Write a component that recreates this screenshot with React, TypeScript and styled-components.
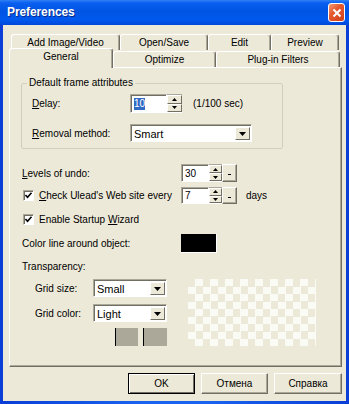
import styled, { createGlobalStyle } from "styled-components";

type tabProp = {
  title: string;
  width: number;
  active?: boolean;
};

const backTabs: tabProp[] = [
  { title: "Add Image/Video", width: 109 },
  { title: "Open/Save", width: 88 },
  { title: "Edit", width: 63 },
  { title: "Preview", width: 68 },
];

const frontTabs: tabProp[] = [
  { title: "General", width: 104, active: true },
  { title: "Optimize", width: 103 },
  { title: "Plug-in Filters", width: 124 },
];

const GlobalStyle = createGlobalStyle`
  html, body {
    margin: 0;
    padding: 0;
    background: #fff;
  }
  body {
    font-family: "Liberation Sans", Arial, sans-serif;
    font-size: 10px;
    color: #000;
  }
`;

const Arrow = ({ dir }: { dir: "up" | "down" }): JSX.Element => (
  <svg width="5" height="3" viewBox="0 0 5 3">
    {dir === "up" ? (
      <polygon points="2.5,0 5,3 0,3" fill="#000" />
    ) : (
      <polygon points="0,0 5,0 2.5,3" fill="#000" />
    )}
  </svg>
);

const Spinner = ({
  value,
  textWidth,
  spinWidth,
  height,
  extra,
  selected,
}: {
  value: string;
  textWidth: number;
  spinWidth: number;
  height: number;
  extra?: boolean;
  selected?: boolean;
}): JSX.Element => (
  <SpinWrap $h={height}>
    <TextBox $w={textWidth}>
      {selected ? <Selected>{value}</Selected> : value}
    </TextBox>
    <SpinCol $w={spinWidth}>
      <SpinBtn>
        <Arrow dir="up" />
      </SpinBtn>
      <SpinBtn>
        <Arrow dir="down" />
      </SpinBtn>
    </SpinCol>
    {extra && (
      <ExtraBtn>
        <Dash />
      </ExtraBtn>
    )}
  </SpinWrap>
);

const Combo = ({
  value,
  width,
  height,
}: {
  value: string;
  width: number;
  height: number;
}): JSX.Element => (
  <ComboBox $w={width} $h={height}>
    <ComboText>{value}</ComboText>
    <ComboBtn>
      <svg width="7" height="4" viewBox="0 0 7 4">
        <polygon points="0,0 7,0 3.5,4" fill="#000" />
      </svg>
    </ComboBtn>
  </ComboBox>
);

const Check = (): JSX.Element => (
  <CheckBox>
    <svg width="9" height="9" viewBox="0 0 9 9">
      <path d="M1.5 4 L3.5 6.2 L7.5 1.8" stroke="#000" strokeWidth="1.6" fill="none" />
    </svg>
  </CheckBox>
);

export default function App(): JSX.Element {
  return (
    <>
      <GlobalStyle />
      <Window>
        <TitleBar>
          <Title>Preferences</Title>
          <CloseButton>
            <svg width="10" height="10" viewBox="0 0 10 10">
              <path d="M1.5 1.5 L8.5 8.5 M8.5 1.5 L1.5 8.5" stroke="#fff" strokeWidth="2" />
            </svg>
          </CloseButton>
        </TitleBar>

        <Frame>
          <Body>
            <Tabs>
              <TabRow $indent={2}>
                {backTabs.map((tab, index) => (
                  <Tab key={index} $w={tab.width}>
                    {tab.title}
                  </Tab>
                ))}
              </TabRow>
              <TabRow $indent={0}>
                {frontTabs.map((tab, index) => (
                  <Tab key={index} $w={tab.width} $active={tab.active} $front>
                    {tab.title}
                  </Tab>
                ))}
              </TabRow>
            </Tabs>

            <Panel>
              <Group>
                <Legend>Default frame attributes</Legend>
                <GroupRow $h={19} $top={5}>
                  <GroupLabel>
                    <u>D</u>elay:
                  </GroupLabel>
                  <Spinner value="10" textWidth={37} spinWidth={15} height={19} selected />
                  <Unit>(1/100 sec)</Unit>
                </GroupRow>
                <GroupRow $h={18} $top={11}>
                  <GroupLabel>
                    <u>R</u>emoval method:
                  </GroupLabel>
                  <Combo value="Smart" width={122} height={18} />
                </GroupRow>
              </Group>

              <Row $h={18} $top={15}>
                <Label>
                  <u>L</u>evels of undo:
                </Label>
                <Spinner value="30" textWidth={28} spinWidth={13} height={18} extra />
              </Row>

              <Row $h={17} $top={5}>
                <Label>
                  <Check />
                  <CheckText>
                    <u>C</u>heck Ulead's Web site every
                  </CheckText>
                </Label>
                <Spinner value="7" textWidth={28} spinWidth={13} height={17} extra />
                <Unit $gap={9}>days</Unit>
              </Row>

              <Row $h={12} $top={9}>
                <Label>
                  <Check />
                  <CheckText>
                    Enable Startup <u>W</u>izard
                  </CheckText>
                </Label>
              </Row>

              <Row $h={19} $top={9}>
                <Label>Color line around object:</Label>
                <ColorSwatch />
              </Row>

              <Row $h={12} $top={7}>
                <Label>Transparency:</Label>
              </Row>

              <GridBlock>
                <GridControls>
                  <GridRow>
                    <GridLabel>Grid size:</GridLabel>
                    <Combo value="Small" width={74} height={18} />
                  </GridRow>
                  <GridRow>
                    <GridLabel>Grid color:</GridLabel>
                    <Combo value="Light" width={74} height={18} />
                  </GridRow>
                  <SwatchRow>
                    <GraySwatch $w={23} />
                    <GraySwatch $w={24} />
                  </SwatchRow>
                </GridControls>
                <Checker />
              </GridBlock>
            </Panel>

            <ButtonRow>
              <Button $default>OK</Button>
              <Button>Отмена</Button>
              <Button $w={68}>Справка</Button>
            </ButtonRow>
          </Body>
        </Frame>
      </Window>
    </>
  );
}

const Window = styled.div`
  width: 349px;
  height: 404px;
  display: flex;
  flex-direction: column;
  overflow: hidden;
  background: #0a46dc;
`;

const TitleBar = styled.div`
  height: 25px;
  flex: none;
  display: flex;
  align-items: center;
  justify-content: space-between;
  padding: 0 4px 1px 7px;
  box-sizing: border-box;
  background: linear-gradient(
    to bottom,
    #2f80f4 0%,
    #0a5ff0 12%,
    #0054e3 45%,
    #0058ee 80%,
    #0048d8 100%
  );
`;

const Title = styled.span`
  color: #fff;
  font-weight: bold;
  font-size: 12px;
  letter-spacing: -0.1px;
  text-shadow: 1px 1px 0 #0a2a8a;
`;

const CloseButton = styled.div`
  width: 17px;
  height: 19px;
  box-sizing: border-box;
  border: 1px solid #fff;
  border-radius: 3px;
  background: linear-gradient(135deg, #f39a74 0%, #e6592e 40%, #d0401c 100%);
  display: flex;
  align-items: center;
  justify-content: center;
  margin-top: 1px;
`;

const Frame = styled.div`
  flex: 1;
  display: flex;
  padding: 0 3px 3px;
  background: linear-gradient(to right, #0a3ed6, #1a63ee 40%, #1a63ee 60%, #0a3ed6);
`;

const Body = styled.div`
  flex: 1;
  display: flex;
  flex-direction: column;
  background: #ece9d8;
  padding: 9px 4px 0 6px;
`;

const Tabs = styled.div`
  display: flex;
  flex-direction: column;
  height: 33px;
  position: relative;
  z-index: 2;
`;

const TabRow = styled.div<{ $indent: number }>`
  display: flex;
  height: 16px;
  padding-left: ${(p) => p.$indent}px;
  & + & {
    height: 17px;
  }
`;

const Tab = styled.div<{ $w: number; $active?: boolean; $front?: boolean }>`
  width: ${(p) => p.$w}px;
  flex: none;
  box-sizing: border-box;
  height: ${(p) => (p.$active ? 20 : 16)}px;
  margin-top: ${(p) => (p.$active ? -2 : p.$front ? 1 : 0)}px;
  padding-bottom: ${(p) => (p.$active ? 4 : 1)}px;
  display: flex;
  align-items: center;
  justify-content: center;
  background: #ece9d8;
  border-top: 1px solid #fff;
  border-left: 1px solid #fff;
  border-right: 1px solid #716f64;
  box-shadow: inset -1px 0 0 #aca899;
  border-radius: 3px 3px 0 0;
  white-space: nowrap;
`;

const Panel = styled.div`
  height: 300px;
  flex: none;
  box-sizing: border-box;
  border-top: 1px solid #fff;
  border-left: 1px solid #fff;
  border-right: 1px solid #716f64;
  border-bottom: 1px solid #716f64;
  box-shadow: inset -1px -1px 0 #aca899;
  display: flex;
  flex-direction: column;
  padding: 9px 0 0 11px;
`;

const Group = styled.fieldset`
  margin: 0;
  width: 262px;
  box-sizing: border-box;
  border: 1px solid #d0d0bf;
  border-radius: 2px;
  padding: 0 0 6px 10px;
  display: flex;
  flex-direction: column;
`;

const Legend = styled.legend`
  padding: 0 2px;
  margin-left: -5px;
  line-height: 12px;
`;

const GroupRow = styled.div<{ $h: number; $top: number }>`
  display: flex;
  align-items: center;
  height: ${(p) => p.$h}px;
  margin-top: ${(p) => p.$top}px;
`;

const GroupLabel = styled.span`
  width: 98px;
  flex: none;
`;

const Row = styled.div<{ $h: number; $top: number }>`
  display: flex;
  align-items: center;
  height: ${(p) => p.$h}px;
  margin-top: ${(p) => p.$top}px;
  padding-left: 1px;
`;

const Label = styled.div`
  width: 159px;
  flex: none;
  display: flex;
  align-items: center;
  white-space: nowrap;
`;

const CheckBox = styled.div`
  width: 11px;
  height: 11px;
  box-sizing: border-box;
  flex: none;
  margin-left: 1px;
  background: #fff;
  border: 1px solid;
  border-color: #aca899 #fff #fff #aca899;
  box-shadow: inset 1px 1px 0 #716f64;
  display: flex;
  align-items: center;
  justify-content: center;
`;

const CheckText = styled.span`
  margin-left: 5px;
`;

const Unit = styled.span<{ $gap?: number }>`
  margin-left: ${(p) => p.$gap ?? 11}px;
`;

const SpinWrap = styled.div<{ $h: number }>`
  display: flex;
  height: ${(p) => p.$h}px;
  flex: none;
`;

const TextBox = styled.div<{ $w: number }>`
  width: ${(p) => p.$w}px;
  box-sizing: border-box;
  background: #fff;
  border: 1px solid;
  border-color: #aca899 #fff #fff #aca899;
  box-shadow: inset 1px 1px 0 #716f64;
  display: flex;
  align-items: center;
  padding-left: 3px;
`;

const Selected = styled.span`
  background: #316ac5;
  color: #fff;
  line-height: 12px;
`;

const SpinCol = styled.div<{ $w: number }>`
  width: ${(p) => p.$w}px;
  display: flex;
  flex-direction: column;
  background: #ece9d8;
  border-top: 1px solid #aca899;
  border-bottom: 1px solid #fff;
  box-sizing: border-box;
`;

const SpinBtn = styled.div`
  flex: 1;
  display: flex;
  align-items: center;
  justify-content: center;
  box-sizing: border-box;
  border-top: 1px solid #fff;
  border-left: 1px solid #fff;
  border-right: 1px solid #716f64;
  border-bottom: 1px solid #716f64;
`;

const ExtraBtn = styled.div`
  width: 15px;
  box-sizing: border-box;
  background: #ece9d8;
  border-top: 1px solid #fff;
  border-left: 1px solid #fff;
  border-right: 1px solid #716f64;
  border-bottom: 1px solid #716f64;
  box-shadow: inset -1px -1px 0 #aca899;
  display: flex;
  align-items: center;
  justify-content: center;
`;

const Dash = styled.div`
  width: 3px;
  height: 1px;
  background: #000;
  margin-top: 3px;
`;

const ComboBox = styled.div<{ $w: number; $h: number }>`
  width: ${(p) => p.$w}px;
  height: ${(p) => p.$h}px;
  flex: none;
  box-sizing: border-box;
  display: flex;
  background: #fff;
  border: 1px solid;
  border-color: #aca899 #fff #fff #aca899;
  box-shadow: inset 1px 1px 0 #716f64;
  padding: 2px 1px 1px 2px;
`;

const ComboText = styled.div`
  flex: 1;
  display: flex;
  align-items: center;
  padding-left: 1px;
  font-size: 11px;
`;

const ComboBtn = styled.div`
  width: 15px;
  box-sizing: border-box;
  background: #ece9d8;
  border-top: 1px solid #fff;
  border-left: 1px solid #fff;
  border-right: 1px solid #716f64;
  border-bottom: 1px solid #716f64;
  display: flex;
  align-items: center;
  justify-content: center;
`;

const ColorSwatch = styled.div`
  width: 36px;
  height: 19px;
  box-sizing: border-box;
  background: #000;
  border-right: 1px solid #fff;
  border-bottom: 1px solid #fff;
`;

const GridBlock = styled.div`
  display: flex;
  margin-top: 7px;
  padding-left: 14px;
  height: 67px;
`;

const GridControls = styled.div`
  display: flex;
  flex-direction: column;
  gap: 7px;
  width: 132px;
`;

const GridRow = styled.div`
  display: flex;
  align-items: center;
  height: 18px;
`;

const GridLabel = styled.span`
  width: 58px;
  flex: none;
`;

const SwatchRow = styled.div`
  display: flex;
  justify-content: flex-end;
  gap: 5px;
  height: 18px;
  margin-top: -1px;
`;

const GraySwatch = styled.div<{ $w: number }>`
  width: ${(p) => p.$w}px;
  height: 18px;
  box-sizing: border-box;
  background: #aca899;
  border-left: 1px solid #000;
  box-shadow: -1px 0 0 #ece9d8;
`;

const Checker = styled.div`
  width: 128px;
  height: 67px;
  margin-left: 21px;
  background-color: #ece9d8;
  background-image: conic-gradient(
    #fbfbf6 25%,
    transparent 0 50%,
    #fbfbf6 0 75%,
    transparent 0
  );
  background-size: 15px 15px;
`;

const ButtonRow = styled.div`
  display: flex;
  justify-content: flex-end;
  gap: 6px;
  margin-top: 6px;
`;

const Button = styled.div<{ $w?: number; $default?: boolean }>`
  width: ${(p) => p.$w ?? 67}px;
  height: 21px;
  box-sizing: border-box;
  display: flex;
  align-items: center;
  justify-content: center;
  background: #ece9d8;
  border: 1px solid;
  border-color: ${(p) =>
    p.$default ? "#000" : "#fff #716f64 #716f64 #fff"};
  box-shadow: ${(p) =>
    p.$default
      ? "inset 1px 1px 0 #fff, inset -1px -1px 0 #716f64"
      : "inset -1px -1px 0 #aca899"};
  font-size: 10px;
`;
